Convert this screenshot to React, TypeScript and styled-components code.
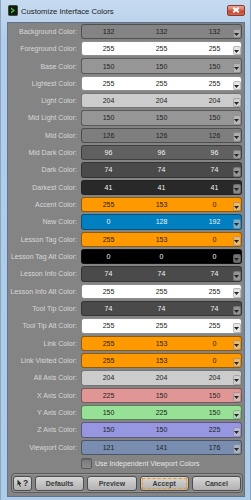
import React from 'react';
import styled, { createGlobalStyle } from 'styled-components';

const GlobalStyle = createGlobalStyle`
  html, body {
    margin: 0;
    padding: 0;
    background: #b9d1ea;
  }
  body {
    font-family: "Liberation Sans", Arial, sans-serif;
  }
`;

type RGB = [number, number, number];

interface ColorRow {
  label: string;
  rgb: RGB;
}

const ROWS: ColorRow[] = [
  { label: 'Background Color:', rgb: [132, 132, 132] },
  { label: 'Foreground Color:', rgb: [255, 255, 255] },
  { label: 'Base Color:', rgb: [150, 150, 150] },
  { label: 'Lightest Color:', rgb: [255, 255, 255] },
  { label: 'Light Color:', rgb: [204, 204, 204] },
  { label: 'Mid Light Color:', rgb: [150, 150, 150] },
  { label: 'Mid Color:', rgb: [126, 126, 126] },
  { label: 'Mid Dark Color:', rgb: [96, 96, 96] },
  { label: 'Dark Color:', rgb: [74, 74, 74] },
  { label: 'Darkest Color:', rgb: [41, 41, 41] },
  { label: 'Accent Color:', rgb: [255, 153, 0] },
  { label: 'New Color:', rgb: [0, 128, 192] },
  { label: 'Lesson Tag Color:', rgb: [255, 153, 0] },
  { label: 'Lesson Tag Alt Color:', rgb: [0, 0, 0] },
  { label: 'Lesson Info Color:', rgb: [74, 74, 74] },
  { label: 'Lesson Info Alt Color:', rgb: [255, 255, 255] },
  { label: 'Tool Tip Color:', rgb: [74, 74, 74] },
  { label: 'Tool Tip Alt Color:', rgb: [255, 255, 255] },
  { label: 'Link Color:', rgb: [255, 153, 0] },
  { label: 'Link Visited Color:', rgb: [255, 153, 0] },
  { label: 'All Axis Color:', rgb: [204, 204, 204] },
  { label: 'X Axis Color:', rgb: [225, 150, 150] },
  { label: 'Y Axis Color:', rgb: [150, 225, 150] },
  { label: 'Z Axis Color:', rgb: [150, 150, 225] },
  { label: 'Viewport Color:', rgb: [121, 141, 176] },
];

const isLight = ([r, g, b]: RGB) => 0.299 * r + 0.587 * g + 0.114 * b > 110;

const App = () => (
  <>
    <GlobalStyle />
    <SWindow>
      <STitleBar>
        <SAppIcon viewBox="0 0 10 11">
          <rect x="0.5" y="0.5" width="9" height="10" rx="1" fill="#151a15" stroke="#3a4a3a" />
          <path d="M3 2.5 L7 5.5 L3 8.5 L3 6.8 L5 5.5 L3 4.2 Z" fill="#3fd13f" />
        </SAppIcon>
        <STitle>Customize Interface Colors</STitle>
        <SCloseButton>
          <svg width="8" height="6" viewBox="0 0 8 6">
            <path d="M1.2 0.8 L6.8 5.2 M6.8 0.8 L1.2 5.2" stroke="#fff" strokeWidth="2" />
          </svg>
        </SCloseButton>
      </STitleBar>

      <SBody>
        <SRows>
          {ROWS.map(({ label, rgb }) => (
            <SRow key={label}>
              <SLabel>{label}</SLabel>
              <SColorBox $rgb={rgb} $light={isLight(rgb)}>
                {rgb.map((v, i) => (
                  <SValue key={i}>{v}</SValue>
                ))}
                <SDropButton>
                  <svg width="5" height="3" viewBox="0 0 5 3">
                    <path d="M0 0 L5 0 L2.5 3 Z" fill="#262626" />
                  </svg>
                </SDropButton>
              </SColorBox>
            </SRow>
          ))}
        </SRows>

        <SCheckRow>
          <SCheckbox />
          <SCheckLabel>Use Independent Viewport Colors</SCheckLabel>
        </SCheckRow>

        <SButtonBar>
          <SHelpButton>
            <svg width="5" height="8" viewBox="0 0 5 8">
              <path d="M0.5 0.5 L0.5 6.5 L1.8 5.3 L3 7.8 L3.9 7.4 L2.8 5 L4.6 5 Z" fill="#2e2e2e" />
            </svg>
            <SHelpMark>?</SHelpMark>
          </SHelpButton>
          <SButton>Defaults</SButton>
          <SButton>Preview</SButton>
          <SButton $focused>Accept</SButton>
          <SButton>Cancel</SButton>
        </SButtonBar>
      </SBody>
    </SWindow>
  </>
);

const SWindow = styled.div`
  width: 251px;
  height: 500px;
  display: flex;
  flex-direction: column;
  box-sizing: border-box;
  background: linear-gradient(to bottom, #c6dbf0 0%, #b3cde8 40px, #aecbe8 100%);
  border-left: 1px solid #8aa6c4;
  border-right: 1px solid #8aa6c4;
  overflow: hidden;
`;

const STitleBar = styled.div`
  height: 22px;
  flex-shrink: 0;
  display: flex;
  align-items: center;
  padding: 0 5px 0 7px;
  box-sizing: border-box;
`;

const SAppIcon = styled.svg`
  width: 10px;
  height: 11px;
  margin-top: -1px;
`;

const STitle = styled.span`
  margin-left: 3px;
  font-size: 7.7px;
  color: #1c1c1c;
  flex: 1;
`;

const SCloseButton = styled.div`
  width: 18px;
  height: 11px;
  margin-top: -2px;
  display: flex;
  align-items: center;
  justify-content: center;
  box-sizing: border-box;
  border: 1px solid #8a3c32;
  border-radius: 2px;
  background: linear-gradient(to bottom, #e8a597 0%, #d9725f 45%, #c4432c 55%, #d3664e 100%);
`;

const SBody = styled.div`
  flex: 1;
  margin: 0 5px 3px 6px;
  border: 1px solid #5d7592;
  background: #848484;
  display: flex;
  flex-direction: column;
  padding: 0.7px 1px 0 0;
`;

const SRows = styled.div`
  display: flex;
  flex-direction: column;
  gap: 2px;
`;

const SRow = styled.div`
  display: grid;
  grid-template-columns: 69px 161px;
  column-gap: 4px;
  align-items: center;
  height: 15.33px;
`;

const SLabel = styled.span`
  text-align: right;
  font-size: 7px;
  color: #d8d8d8;
  white-space: nowrap;
`;

const SColorBox = styled.div<{ $rgb: RGB; $light: boolean }>`
  position: relative;
  height: 15.33px;
  box-sizing: border-box;
  display: grid;
  grid-template-columns: 1fr 1fr 1fr;
  align-items: center;
  border: 1px solid rgba(30, 30, 30, 0.5);
  border-radius: 3px;
  background: ${({ $rgb }) => `rgb(${$rgb.join(',')})`};
  color: ${({ $light }) => ($light ? '#1e1e1e' : '#f2f2f2')};
`;

const SValue = styled.span`
  text-align: center;
  font-size: 7px;
  line-height: 1;
`;

const SDropButton = styled.div`
  position: absolute;
  right: 0;
  bottom: 0;
  width: 8.5px;
  height: 9.5px;
  box-sizing: border-box;
  border: 1px solid rgba(0, 0, 0, 0.2);
  border-radius: 2px;
  background: rgba(210, 210, 210, 0.55);
  display: flex;
  align-items: flex-end;
  justify-content: center;
  padding-bottom: 1.5px;
`;

const SCheckRow = styled.div`
  display: flex;
  align-items: center;
  margin: 3.3px 0 0 73px;
`;

const SCheckbox = styled.div`
  width: 11px;
  height: 11px;
  box-sizing: border-box;
  border: 1px solid #5a5a5a;
  border-radius: 2px;
  background: linear-gradient(to bottom, #7a7a7a, #8c8c8c);
  box-shadow: inset 0 1px 1px rgba(0, 0, 0, 0.2);
`;

const SCheckLabel = styled.span`
  margin-left: 3px;
  font-size: 7px;
  color: #e4e4e4;
`;

const SButtonBar = styled.div`
  margin: 4.3px 0 0 3px;
  height: 20px;
  box-sizing: border-box;
  border: 1px solid #5c5c5c;
  border-radius: 4px;
  box-shadow: inset 0 0 0 1px rgba(255, 255, 255, 0.12);
  display: flex;
  align-items: center;
  gap: 3px;
  padding: 0 1px;
`;

const SButtonBase = styled.div`
  height: 15px;
  box-sizing: border-box;
  border: 1px solid #4e4e4e;
  border-radius: 3px;
  background: linear-gradient(to bottom, #d8d8d8 0%, #c4c4c4 50%, #b2b2b2 100%);
  display: flex;
  align-items: center;
  justify-content: center;
  font-size: 7px;
  font-weight: bold;
  color: #3a3a3a;
`;

const SHelpButton = styled(SButtonBase)`
  width: 19px;
  flex-shrink: 0;
  gap: 1px;
`;

const SHelpMark = styled.span`
  font-size: 8.5px;
  color: #2e2e2e;
`;

const SButton = styled(SButtonBase)<{ $focused?: boolean }>`
  flex: 1;
  position: relative;

  &::after {
    content: '';
    display: ${({ $focused }) => ($focused ? 'block' : 'none')};
    position: absolute;
    inset: 1px;
    border: 1px dashed #f39a1e;
    border-radius: 1px;
  }
`;

export default App;
